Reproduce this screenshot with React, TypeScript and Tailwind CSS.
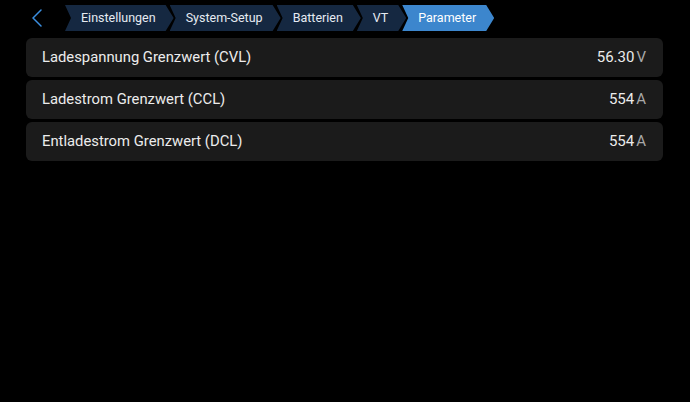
import React from 'react';

const crumbs = ['Einstellungen', 'System-Setup', 'Batterien', 'VT', 'Parameter'];

const rows = [
  { label: 'Ladespannung Grenzwert (CVL)', value: '56.30', unit: 'V' },
  { label: 'Ladestrom Grenzwert (CCL)', value: '554', unit: 'A' },
  { label: 'Entladestrom Grenzwert (DCL)', value: '554', unit: 'A' },
];

const App: React.FC = () => {
  return (
    <div className="w-[690px] h-[402px] bg-black text-white font-['Roboto',sans-serif] overflow-hidden">
      {/* Header with back button and breadcrumb */}
      <div className="flex items-center h-[36px] pt-[5px] pb-[5px]">
        <button className="ml-[29px] w-[16px] h-[26px] flex items-center justify-center">
          <svg width="14" height="18" viewBox="0 0 14 18" fill="none">
            <path d="M11 1 L3 9 L11 17" stroke="#3b8fe0" strokeWidth="1.5" strokeLinecap="round" strokeLinejoin="round" />
          </svg>
        </button>
        <div className="flex ml-[20px] h-[26px]">
          {crumbs.map((c, i) => {
            const active = i === crumbs.length - 1;
            return (
              <div
                key={c}
                className={`h-[26px] flex items-center pl-[16px] pr-[18px] text-[12.5px] [clip-path:polygon(0_0,calc(100%-8px)_0,100%_50%,calc(100%-8px)_100%,0_100%,6px_50%)] ${
                  i > 0 ? '-ml-[4px]' : ''
                } ${active ? 'bg-[#3c86cd] text-white' : 'bg-[#152841] text-[#e6ebf2]'}`}
              >
                {c}
              </div>
            );
          })}
        </div>
      </div>

      {/* Parameter list */}
      <div className="flex flex-col gap-[3px] mt-[2px] ml-[26px] w-[637px]">
        {rows.map((r) => (
          <div
            key={r.label}
            className="h-[39px] rounded-[6px] bg-[#1b1b1b] flex items-center justify-between pl-[16px] pr-[17px]"
          >
            <span className="text-[14.8px] text-[#ececec]">{r.label}</span>
            <span className="text-[15px] text-[#ececec]">
              {r.value}
              <span className="ml-[2px] text-[#a8a8a8]">{r.unit}</span>
            </span>
          </div>
        ))}
      </div>
    </div>
  );
};

export default App;
